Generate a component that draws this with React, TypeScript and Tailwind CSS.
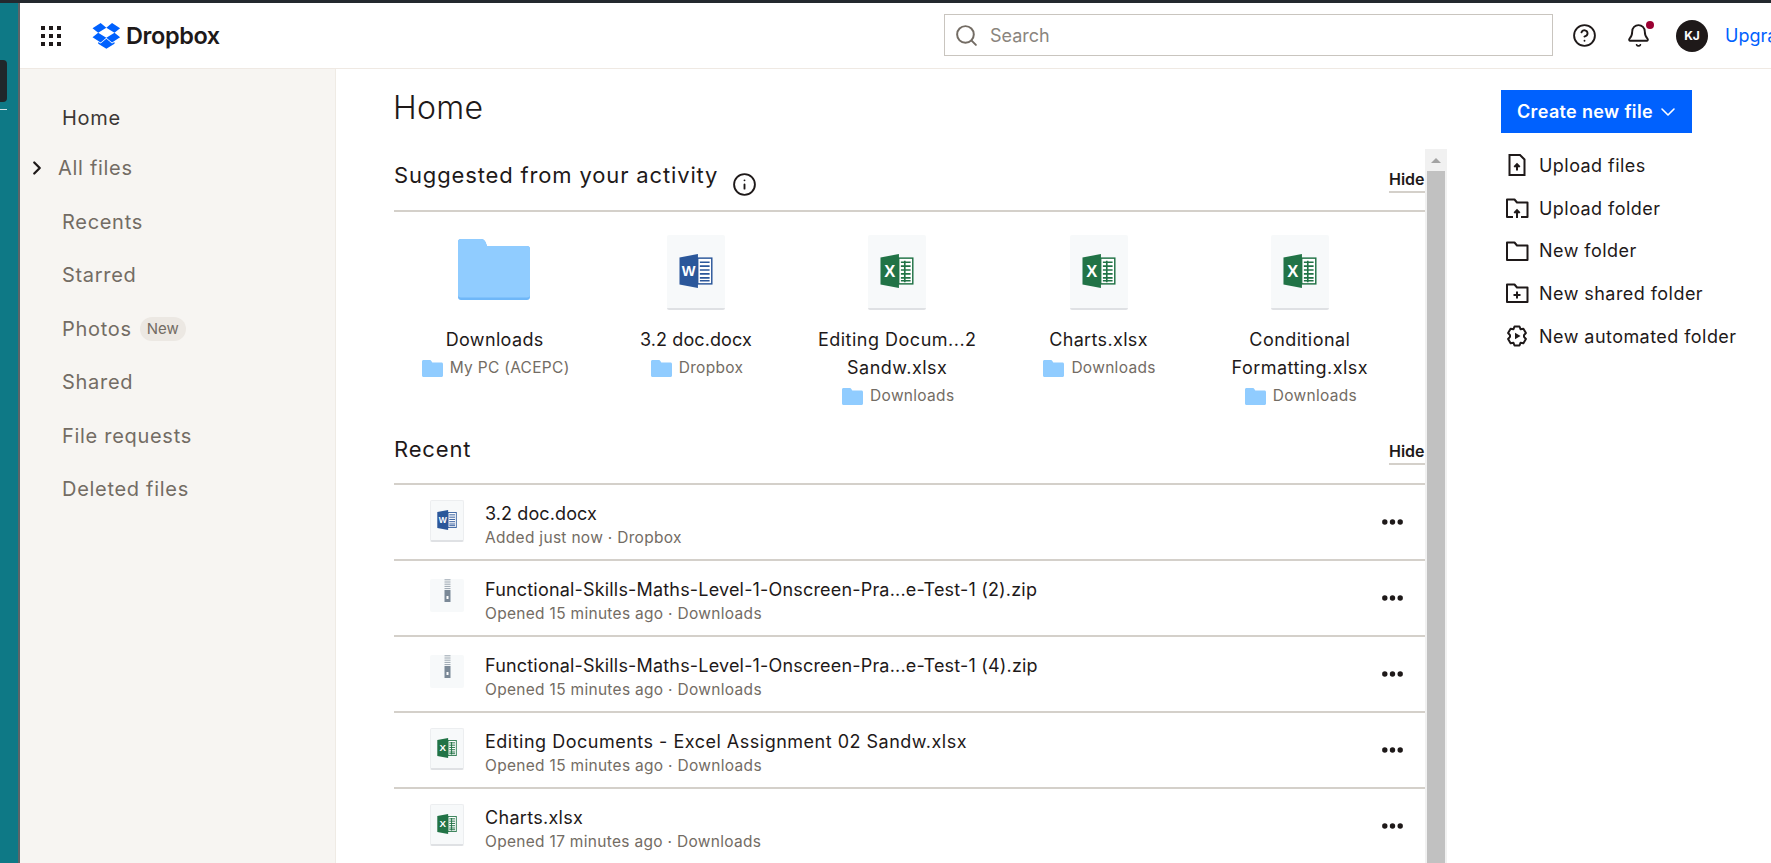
import React from "react";
import { Search, CircleHelp, Bell, Info, ChevronRight, ChevronDown } from "lucide-react";

const body = "font-['Inter','Liberation_Sans',sans-serif]";

function SmallFolder() {
  return (
    <svg width="21" height="17" viewBox="0 0 21 17" className="shrink-0">
      <path d="M1.5 0H7.5C8.5 0 9 .5 9.5 1.2L10.3 2.5H19.5C20.4 2.5 21 3.1 21 4V15.5C21 16.4 20.4 17 19.5 17H1.5C.6 17 0 16.4 0 15.5V1.5C0 .6.6 0 1.5 0Z" fill="#90ccff" />
    </svg>
  );
}

function BigFolder() {
  return (
    <svg width="72" height="61" viewBox="0 0 72 61">
      <path d="M3 0H23C25 0 26.5 1 27.5 3L29 7H69C70.8 7 72 8.2 72 10V58C72 59.8 70.8 61 69 61H3C1.2 61 0 59.8 0 58V3C0 1.2 1.2 0 3 0Z" fill="#6fb7f8" />
      <path d="M3 0H23C25 0 26.5 1 27.5 3L29 7H69C70.8 7 72 8.2 72 10V56C72 57.8 70.8 58.5 69 58.5H3C1.2 58.5 0 57.8 0 56V3C0 1.2 1.2 0 3 0Z" fill="#90ccff" />
    </svg>
  );
}

function WordGlyph({ size }: { size: number }) {
  return (
    <svg width={size} height={size} viewBox="0 0 34 35">
      <rect x="18" y="3.5" width="16" height="28" fill="#2b579a" />
      <rect x="19.5" y="5" width="13" height="25" fill="#ffffff" />
      <path d="M21 8.5H31M21 12.5H31M21 16.5H31M21 20.5H31M21 24.5H31M21 27.5H31" stroke="#2b579a" strokeWidth="1.7" />
      <path d="M0 3.5L19 0V35L0 31.5Z" fill="#2b579a" />
      <text x="9.5" y="22.5" textAnchor="middle" fontFamily="'Liberation Sans',sans-serif" fontWeight="700" fontSize="15" fill="#ffffff">W</text>
    </svg>
  );
}

function ExcelGlyph({ size }: { size: number }) {
  return (
    <svg width={size} height={size} viewBox="0 0 34 35">
      <rect x="18" y="3.5" width="16" height="28" fill="#217346" />
      <rect x="19.5" y="5" width="13" height="25" fill="#ffffff" />
      <path d="M21 8.5H31M21 12.5H31M21 16.5H31M21 20.5H31M21 24.5H31M21 27.5H31M25 7V29" stroke="#217346" strokeWidth="1.7" />
      <path d="M0 3.5L19 0V35L0 31.5Z" fill="#217346" />
      <text x="9.5" y="23.5" textAnchor="middle" fontFamily="'Liberation Sans',sans-serif" fontWeight="700" fontSize="17" fill="#ffffff">X</text>
    </svg>
  );
}

function ZipGlyph() {
  return (
    <svg width="7" height="23" viewBox="0 0 7 23">
      <path d="M.5 .8H6.5M.5 3H6.5M.5 5.2H6.5M.5 7.4H6.5M.5 9.6H6.5" stroke="#9aa5af" strokeWidth="1" />
      <rect x="0.5" y="11" width="6" height="12" fill="#7b8997" />
      <rect x="2.5" y="17" width="2" height="3" fill="#ffffff" />
    </svg>
  );
}

function BigDoc({ kind }: { kind: "word" | "excel" }) {
  return (
    <div className="w-[58px] h-[75px] rounded-[2px] bg-[#f7f9fa] border-b-2 border-[#dfe1e4] flex items-center justify-center pb-[2px]">
      {kind === "word" ? <WordGlyph size={34} /> : <ExcelGlyph size={34} />}
    </div>
  );
}

function SmallDoc({ kind }: { kind: "word" | "excel" | "zip" }) {
  if (kind === "zip") {
    return (
      <div className="w-[34px] h-[33px] mb-[6px] rounded-[2px] bg-[#f7f9fa] flex justify-center shrink-0">
        <ZipGlyph />
      </div>
    );
  }
  return (
    <div className="w-[34px] h-[42px] mb-[3px] rounded-[2px] bg-[#f7f9fa] flex items-center justify-center shrink-0 border border-[#eceef0] border-b-2 border-b-[#dfe1e4]">
      {kind === "word" ? <WordGlyph size={20} /> : <ExcelGlyph size={20} />}
    </div>
  );
}

const tiles: { name: string[]; where: string; icon: "folder" | "word" | "excel"; track: string }[] = [
  { name: ["Downloads"], where: "My PC (ACEPC)", icon: "folder", track: "tracking-[0.35px]" },
  { name: ["3.2 doc.docx"], where: "Dropbox", icon: "word", track: "tracking-[0.1px]" },
  { name: ["Editing Docum...2", "Sandw.xlsx"], where: "Downloads", icon: "excel", track: "tracking-[0.5px]" },
  { name: ["Charts.xlsx"], where: "Downloads", icon: "excel", track: "tracking-[0.35px]" },
  { name: ["Conditional", "Formatting.xlsx"], where: "Downloads", icon: "excel", track: "tracking-[0.45px]" },
];

const rows: { title: string; sub: string; icon: "word" | "excel" | "zip"; track: string }[] = [
  { title: "3.2 doc.docx", sub: "Added just now · Dropbox", icon: "word", track: "tracking-[0.1px]" },
  { title: "Functional-Skills-Maths-Level-1-Onscreen-Pra...e-Test-1 (2).zip", sub: "Opened 15 minutes ago · Downloads", icon: "zip", track: "tracking-[0.18px]" },
  { title: "Functional-Skills-Maths-Level-1-Onscreen-Pra...e-Test-1 (4).zip", sub: "Opened 15 minutes ago · Downloads", icon: "zip", track: "tracking-[0.18px]" },
  { title: "Editing Documents - Excel Assignment 02 Sandw.xlsx", sub: "Opened 15 minutes ago · Downloads", icon: "excel", track: "tracking-[0.5px]" },
  { title: "Charts.xlsx", sub: "Opened 17 minutes ago · Downloads", icon: "excel", track: "tracking-[0.3px]" },
];

const nav = ["Recents", "Starred", "Photos", "Shared", "File requests", "Deleted files"];

function Dots() {
  return (
    <svg width="21" height="6" viewBox="0 0 21 6">
      <circle cx="2.8" cy="3" r="2.7" fill="#1e1919" />
      <circle cx="10.5" cy="3" r="2.7" fill="#1e1919" />
      <circle cx="18.2" cy="3" r="2.7" fill="#1e1919" />
    </svg>
  );
}

function SectionHead({ title, info, top }: { title: string; info?: boolean; top: string }) {
  return (
    <div className={"h-full flex items-start border-b-2 border-[#d4d0ca] " + top}>
      <span className="text-[22px] leading-[28px] text-[#1e1919] font-normal tracking-[0.85px]">{title}</span>
      {info && <Info size={25} strokeWidth={1.8} className="ml-[14px] mt-[11px] text-[#1e1919]" />}
    </div>
  );
}

const actions: { label: string; icon: React.ReactNode }[] = [
  {
    label: "Upload files",
    icon: (
      <svg width="24" height="24" viewBox="0 0 24 24" fill="none" stroke="#1e1919" strokeWidth="2">
        <path d="M4.5 2H15L19.5 6.5V22H4.5Z" />
        <path d="M12 17.5V11.5M9.3 14L12 11.2L14.7 14" />
      </svg>
    ),
  },
  {
    label: "Upload folder",
    icon: (
      <svg width="24" height="24" viewBox="0 0 24 24" fill="none" stroke="#1e1919" strokeWidth="2">
        <path d="M8 21H2V3.5H9.5L12 6.5H22.5V21H16" strokeLinejoin="round" />
        <path d="M12 22V14.5M9.3 17L12 14.2L14.7 17" />
      </svg>
    ),
  },
  {
    label: "New folder",
    icon: (
      <svg width="24" height="24" viewBox="0 0 24 24" fill="none" stroke="#1e1919" strokeWidth="2" strokeLinejoin="round">
        <path d="M2 3.5H9.5L12 6.5H22.5V21H2Z" />
      </svg>
    ),
  },
  {
    label: "New shared folder",
    icon: (
      <svg width="24" height="24" viewBox="0 0 24 24" fill="none" stroke="#1e1919" strokeWidth="2" strokeLinejoin="round">
        <path d="M2 3.5H9.5L12 6.5H22.5V21H2Z" />
        <path d="M12 10.5V17.5M8.5 14H15.5" />
      </svg>
    ),
  },
  {
    label: "New automated folder",
    icon: (
      <svg width="24" height="24" viewBox="0 0 24 24" fill="none" stroke="#1e1919" strokeWidth="2" strokeLinejoin="round">
        <path d="M9.5 2.5H14.5L15.5 5.2L18.4 4.7L20.9 9L19 11.2V12.8L20.9 15L18.4 19.3L15.5 18.8L14.5 21.5H9.5L8.5 18.8L5.6 19.3L3.1 15L5 12.8V11.2L3.1 9L5.6 4.7L8.5 5.2Z" />
        <path d="M10 8.8L15.5 12L10 15.2Z" fill="#1e1919" stroke="none" />
      </svg>
    ),
  },
];

export default function App() {
  return (
    <div className={"relative w-full h-[863px] overflow-hidden bg-white flex flex-col " + body}>
      <div className="h-[3px] bg-[#23292e] shrink-0" />
      <div className="flex-1 flex min-h-0">
        {/* desktop strip */}
        <div className="w-[20px] shrink-0 bg-[#0e7986] border-r-2 border-[#5c6468]" />
        <div className="flex-1 min-w-0 flex flex-col">
          {/* header */}
          <header className="h-[66px] shrink-0 border-b border-[#efe9e3] flex items-center">
            <div className="w-[924px] shrink-0 flex items-center pl-[21px]">
              <div className="grid grid-cols-3 gap-x-[4px] gap-y-[4px] w-[20px] shrink-0">
                {Array.from({ length: 9 }).map((_, i) => (
                  <span key={i} className="w-[4px] h-[4px] bg-[#1e1919]" />
                ))}
              </div>
              <svg width="31" height="26" viewBox="0 0 43 40" className="ml-[30px] shrink-0" fill="#0061fe">
                <path d="M12.5 0L0 8.1l8.7 7 12.5-7.8-8.7-7.3zM0 21.9l12.5 8.2 8.7-7.3-12.5-7.7-8.7 6.8zm21.2.9l8.8 7.3 12.4-8.1-8.6-6.9-12.6 7.7zm21.2-14.7L30 0l-8.8 7.3 12.6 7.8 8.6-7zM21.3 24.4l-8.8 7.3-3.7-2.5V32l12.5 7.5L33.8 32v-2.8l-3.8 2.5-8.7-7.3z" />
              </svg>
              <span className="ml-[4px] text-[23.5px] font-semibold tracking-[-0.4px] text-[#1e1919]">Dropbox</span>
            </div>
            <div className="w-[609px] h-[42px] shrink-0 border border-[#c9c5bf] flex items-center pl-[9px] mt-[-1px]">
              <Search size={25} strokeWidth={1.9} className="text-[#736c64]" />
              <span className="ml-[11px] text-[18px] text-[#8a857e]">Search</span>
            </div>
            <div className="flex-1 min-w-0 flex items-center overflow-hidden">
              <CircleHelp size={25} strokeWidth={1.8} className="ml-[18.5px] shrink-0 text-[#1e1919]" />
              <div className="relative ml-[29px] shrink-0 w-[25px] h-[25px]">
                <Bell size={25} strokeWidth={1.8} className="text-[#1e1919]" />
                <span className="absolute right-[-3.5px] top-[-2.5px] w-[8px] h-[8px] rounded-full bg-[#9b0032]" />
              </div>
              <div className="ml-[25.5px] shrink-0 w-[32px] h-[32px] rounded-full bg-[#1e1919] text-white flex items-center justify-center text-[12px] font-bold">
                KJ
              </div>
              <span className="ml-[17px] shrink-0 text-[18px] text-[#0061fe]">Upgrade</span>
            </div>
          </header>

          <div className="flex-1 min-h-0 flex">
            {/* sidebar */}
            <aside className="w-[316px] shrink-0 bg-[#f7f5f2] border-r border-[#efebe5] pt-[24px] text-[20px] tracking-[0.7px] text-[#736c64]">
              <div className="h-[50px] flex items-center pl-[42px] text-[#3b3735]">Home</div>
              <div className="h-[50px] mb-[2px] flex items-center pl-[6px]">
                <ChevronRight size={22} strokeWidth={2.5} className="text-[#1e1919]" />
                <span className="ml-[10px]">All files</span>
              </div>
              {nav.map((n) => (
                <div key={n} className="h-[53.5px] flex items-center pl-[42px]">
                  {n}
                  {n === "Photos" && (
                    <span className="ml-[8px] h-[24px] px-[7px] rounded-full bg-[#ece8e3] text-[15px] tracking-normal flex items-center">New</span>
                  )}
                </div>
              ))}
            </aside>

            {/* main */}
            <main className="w-[1053px] shrink-0 ml-[58px] flex flex-col min-h-0">
              <div className="h-[80px] shrink-0 pt-[17px]">
                <h1 className="text-[32px] leading-[44px] font-light text-[#1e1919] tracking-[0.3px] ml-[-1px]">Home</h1>
              </div>
              <div className="flex-1 min-h-0 flex">
                <div className="w-[1031px] shrink-0">
                  <div className="h-[63px]">
                    <SectionHead title="Suggested from your activity" info top="pt-[12px]" />
                  </div>
                  <div className="h-[208px] flex pt-[23px]">
                    {tiles.map((t, i) => (
                      <div key={i} className="w-[201.3px] shrink-0 flex flex-col items-center text-center">
                        <div className="h-[75px] flex items-start justify-center">
                          {t.icon === "folder" ? (
                            <div className="mt-[4px] mr-[2px]">
                              <BigFolder />
                            </div>
                          ) : (
                            <BigDoc kind={t.icon} />
                          )}
                        </div>
                        <div className={"mt-[16px] text-[18px] leading-[28px] text-[#1e1919] " + t.track}>
                          {t.name.map((l) => (
                            <div key={l}>{l}</div>
                          ))}
                        </div>
                        <div className="flex items-center gap-[7px] pl-[2px] text-[15.5px] leading-[28px] tracking-[0.3px] text-[#736c64]">
                          <SmallFolder />
                          <span>{t.where}</span>
                        </div>
                      </div>
                    ))}
                  </div>
                  <div className="h-[65px]">
                    <SectionHead title="Recent" top="pt-[15px]" />
                  </div>
                  {rows.map((r, i) => (
                    <div key={i} className="h-[76px] flex items-center border-b-2 border-[#d4d0ca] pl-[36px]">
                      <SmallDoc kind={r.icon} />
                      <div className="ml-[21px] flex-1 min-w-0 mt-[6px]">
                        <div className={"text-[18px] leading-[26px] text-[#1e1919] " + r.track}>{r.title}</div>
                        <div className="text-[15.5px] leading-[22px] tracking-[0.3px] text-[#736c64]">{r.sub}</div>
                      </div>
                      <div className="mr-[22px] flex items-center">
                        <Dots />
                      </div>
                    </div>
                  ))}
                </div>
                {/* scrollbar */}
                <div className="w-[22px] shrink-0 bg-[#f1f1f1] flex flex-col items-center">
                  <div className="h-[22px] w-full flex items-center justify-center">
                    <span className="w-0 h-0 border-x-[5px] border-x-transparent border-b-[5px] border-b-[#a3a3a3]" />
                  </div>
                  <div className="flex-1 w-[18px] bg-[#c1c1c1]" />
                </div>
              </div>
            </main>

            {/* right rail */}
            <div className="ml-[54px] flex-1 min-w-0 pt-[21px]">
              <div className="w-[191px] h-[43px] bg-[#0061fe] text-white flex items-center pl-[16px] text-[18px] font-semibold tracking-[0.35px]">
                Create new file
                <ChevronDown size={24} strokeWidth={1.6} className="ml-[3px]" />
              </div>
              <div className="mt-[11px]">
                {actions.map((a) => (
                  <div key={a.label} className="h-[42.7px] flex items-center pl-[4px] text-[18px] tracking-[0.45px] text-[#1e1919]">
                    <span className="w-[24px] shrink-0 flex justify-center">{a.icon}</span>
                    <span className="ml-[10px] whitespace-nowrap">{a.label}</span>
                  </div>
                ))}
              </div>
            </div>
          </div>
        </div>
      </div>

      {/* taskbar tab peeking in over the desktop strip */}
      <div className="absolute left-0 top-[60px] w-[7px] h-[42px] rounded-r-[4px] bg-[#20272b]" />
      <div className="absolute left-0 top-[109px] w-[7px] h-px bg-[#cfe3e6]" />

      {/* Hide links sit on the section rules */}
      <div className="absolute left-[1389px] top-[167px] w-[36px] h-[26px] border-b-2 border-[#d4d0ca] text-[16px] font-semibold text-[#1e1919] leading-[24px] overflow-hidden">Hide</div>
      <div className="absolute left-[1389px] top-[439px] w-[36px] h-[26px] border-b-2 border-[#d4d0ca] text-[16px] font-semibold text-[#1e1919] leading-[24px] overflow-hidden">Hide</div>
    </div>
  );
}
